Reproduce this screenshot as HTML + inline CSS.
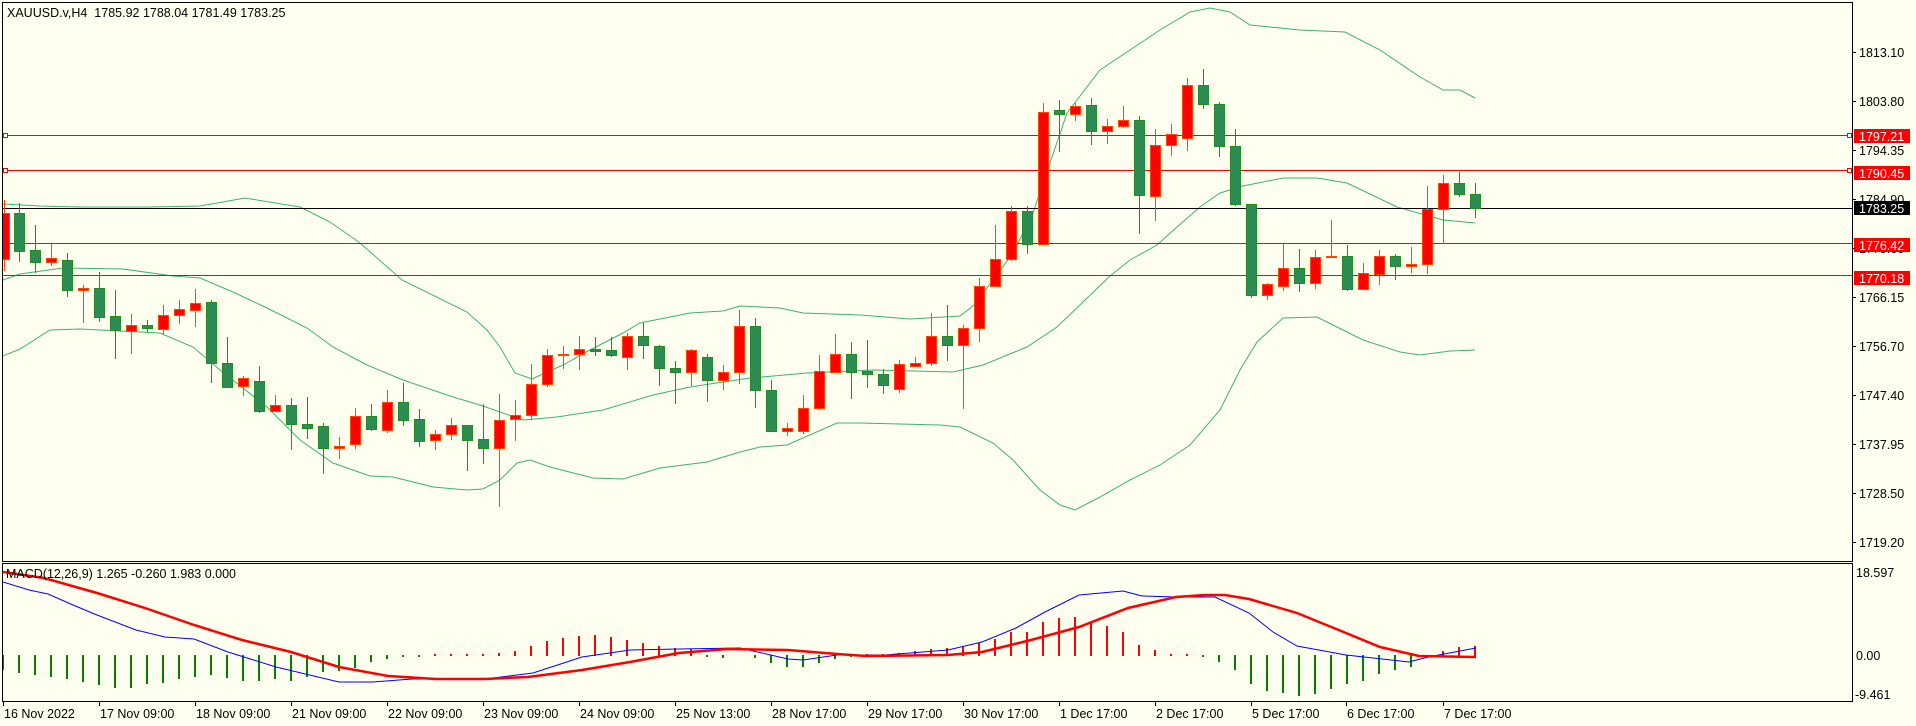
<!DOCTYPE html>
<html><head><meta charset="utf-8"><style>
html,body{margin:0;padding:0;background:#fffff0;}
svg{display:block;}
text{font-family:"Liberation Sans",sans-serif;font-size:12.5px;fill:#000;}
.g rect{fill:#2e8b57;stroke:#228b22;}
.g line{stroke:#228b22;}
.r rect{fill:#ff0000;stroke:#ff4500;}
.r line{stroke:#ff4500;}
</style></head><body>
<svg width="1916" height="726" viewBox="0 0 1916 726" xmlns="http://www.w3.org/2000/svg" shape-rendering="crispEdges">
<rect width="1916" height="726" fill="#fffff0"/>
<defs><clipPath id="cp"><rect x="3" y="3" width="1849" height="558"/></clipPath>
<clipPath id="cm"><rect x="3" y="564" width="1849" height="138"/></clipPath></defs>

<g clip-path="url(#cp)">
<g fill="none" stroke="#3cb371" stroke-width="1" shape-rendering="auto">
<polyline points="3,204 40,206 80,207 150,207 200,206 245,198 300,207 330,222 360,243 402,280 467,312 487,330 500,347 515,373 532,379 563,365 590,350 623,333 640,323 690,313 723,311 740,306 780,308 803,313 860,315 910,319 960,316 973,306 993,280 1013,253 1033,213 1050,163 1067,113 1100,70 1130,50 1160,30 1190,12 1210,8 1230,12 1250,25 1300,30 1345,32 1380,50 1420,77 1443,90 1460,90 1475,98"/>
<polyline points="3,280 20,274 63,268 123,269 173,276 200,278 233,292 267,308 307,328 333,347 367,365 403,380 453,397 480,405 523,420 557,417 603,410 653,395 690,387 750,378 807,373 873,370 953,372 983,365 1027,347 1057,327 1110,276 1130,260 1157,245 1177,227 1200,207 1220,193 1243,186 1283,178 1317,178 1347,183 1397,207 1443,220 1475,223"/>
<polyline points="3,356 20,349 50,330 80,329 120,331 160,333 193,347 220,370 267,407 300,440 333,463 370,476 393,477 433,487 467,490 483,489 500,480 517,463 530,460 550,467 593,478 623,479 660,468 707,462 740,452 760,447 787,445 837,423 860,423 940,425 960,427 993,443 1013,460 1040,490 1060,505 1075,510 1100,497 1130,480 1160,465 1190,445 1220,410 1240,370 1257,342 1283,318 1317,317 1363,340 1400,352 1420,355 1450,351 1475,350"/>
</g>
<g stroke-width="1">
<line x1="3" y1="135.5" x2="1852" y2="135.5" stroke="#ff0000"/>
<line x1="3" y1="170.5" x2="1852" y2="170.5" stroke="#ff0000"/>
<line x1="3" y1="208.5" x2="1852" y2="208.5" stroke="#000"/>
<line x1="3" y1="243.5" x2="1852" y2="243.5" stroke="#ff0000"/>
<line x1="3" y1="275.5" x2="1852" y2="275.5" stroke="#ff0000"/>
</g>
<rect x="3.5" y="133.5" width="4" height="4" fill="#fff" stroke="#ff0000"/>
<rect x="3.5" y="168.5" width="4" height="4" fill="#fff" stroke="#ff0000"/>
<rect x="1847.5" y="133.5" width="4" height="4" fill="#fff" stroke="#ff0000"/>
<rect x="1847.5" y="168.5" width="4" height="4" fill="#fff" stroke="#ff0000"/>

<g class="r"><line x1="4.5" y1="200" x2="4.5" y2="271"/><rect x="-0.5" y="213.5" width="10" height="46"/></g>
<g class="g"><line x1="19.5" y1="203" x2="19.5" y2="262"/><rect x="14.5" y="213.5" width="10" height="38"/></g>
<g class="g"><line x1="35.5" y1="225" x2="35.5" y2="273"/><rect x="30.5" y="250.5" width="10" height="12"/></g>
<g class="r"><line x1="51.5" y1="244" x2="51.5" y2="266"/><rect x="46.5" y="258.5" width="10" height="4"/></g>
<g class="g"><line x1="67.5" y1="253" x2="67.5" y2="297"/><rect x="62.5" y="260.5" width="10" height="30"/></g>
<g class="r"><line x1="83.5" y1="285" x2="83.5" y2="323"/><rect x="78.5" y="288.5" width="10" height="2"/></g>
<g class="g"><line x1="99.5" y1="272" x2="99.5" y2="322"/><rect x="94.5" y="288.5" width="10" height="29"/></g>
<g class="g"><line x1="115.5" y1="290" x2="115.5" y2="359"/><rect x="110.5" y="316.5" width="10" height="14"/></g>
<g class="r"><line x1="131.5" y1="314" x2="131.5" y2="354"/><rect x="126.5" y="325.5" width="10" height="6"/></g>
<g class="g"><line x1="147.5" y1="320" x2="147.5" y2="332"/><rect x="142.5" y="325.5" width="10" height="3"/></g>
<g class="r"><line x1="163.5" y1="305" x2="163.5" y2="334"/><rect x="158.5" y="315.5" width="10" height="14"/></g>
<g class="r"><line x1="179.5" y1="300" x2="179.5" y2="324"/><rect x="174.5" y="309.5" width="10" height="6"/></g>
<g class="r"><line x1="195.5" y1="289" x2="195.5" y2="327"/><rect x="190.5" y="303.5" width="10" height="7"/></g>
<g class="g"><line x1="211.5" y1="300" x2="211.5" y2="383"/><rect x="206.5" y="302.5" width="10" height="61"/></g>
<g class="g"><line x1="227.5" y1="337" x2="227.5" y2="388"/><rect x="222.5" y="363.5" width="10" height="24"/></g>
<g class="r"><line x1="243.5" y1="376" x2="243.5" y2="396"/><rect x="238.5" y="378.5" width="10" height="8"/></g>
<g class="g"><line x1="259.5" y1="366" x2="259.5" y2="413"/><rect x="254.5" y="381.5" width="10" height="30"/></g>
<g class="r"><line x1="275.5" y1="395" x2="275.5" y2="412"/><rect x="270.5" y="405.5" width="10" height="6"/></g>
<g class="g"><line x1="291.5" y1="398" x2="291.5" y2="450"/><rect x="286.5" y="405.5" width="10" height="19"/></g>
<g class="g"><line x1="307.5" y1="397" x2="307.5" y2="439"/><rect x="302.5" y="424.5" width="10" height="4"/></g>
<g class="g"><line x1="323.5" y1="423" x2="323.5" y2="474"/><rect x="318.5" y="426.5" width="10" height="22"/></g>
<g class="r"><line x1="339.5" y1="437" x2="339.5" y2="459"/><rect x="334.5" y="446.5" width="10" height="2"/></g>
<g class="r"><line x1="355.5" y1="408" x2="355.5" y2="449"/><rect x="350.5" y="416.5" width="10" height="28"/></g>
<g class="g"><line x1="371.5" y1="404" x2="371.5" y2="431"/><rect x="366.5" y="416.5" width="10" height="13"/></g>
<g class="r"><line x1="387.5" y1="390" x2="387.5" y2="433"/><rect x="382.5" y="402.5" width="10" height="28"/></g>
<g class="g"><line x1="403.5" y1="383" x2="403.5" y2="426"/><rect x="398.5" y="402.5" width="10" height="18"/></g>
<g class="g"><line x1="419.5" y1="409" x2="419.5" y2="447"/><rect x="414.5" y="419.5" width="10" height="22"/></g>
<g class="r"><line x1="435.5" y1="430" x2="435.5" y2="450"/><rect x="430.5" y="434.5" width="10" height="6"/></g>
<g class="r"><line x1="451.5" y1="418" x2="451.5" y2="440"/><rect x="446.5" y="425.5" width="10" height="9"/></g>
<g class="g"><line x1="467.5" y1="425" x2="467.5" y2="471"/><rect x="462.5" y="425.5" width="10" height="15"/></g>
<g class="g"><line x1="483.5" y1="404" x2="483.5" y2="464"/><rect x="478.5" y="439.5" width="10" height="9"/></g>
<g class="r"><line x1="499.5" y1="394" x2="499.5" y2="507"/><rect x="494.5" y="420.5" width="10" height="28"/></g>
<g class="r"><line x1="515.5" y1="400" x2="515.5" y2="441"/><rect x="510.5" y="415.5" width="10" height="4"/></g>
<g class="r"><line x1="531.5" y1="364" x2="531.5" y2="420"/><rect x="526.5" y="384.5" width="10" height="31"/></g>
<g class="r"><line x1="547.5" y1="349" x2="547.5" y2="387"/><rect x="542.5" y="355.5" width="10" height="29"/></g>
<g class="r"><line x1="563.5" y1="346" x2="563.5" y2="369"/><rect x="558.5" y="354.5" width="10" height="1"/></g>
<g class="r"><line x1="579.5" y1="336" x2="579.5" y2="370"/><rect x="574.5" y="349.5" width="10" height="5"/></g>
<g class="g"><line x1="595.5" y1="337" x2="595.5" y2="356"/><rect x="590.5" y="349.5" width="10" height="2"/></g>
<g class="g"><line x1="611.5" y1="337" x2="611.5" y2="357"/><rect x="606.5" y="350.5" width="10" height="5"/></g>
<g class="r"><line x1="627.5" y1="333" x2="627.5" y2="370"/><rect x="622.5" y="336.5" width="10" height="21"/></g>
<g class="g"><line x1="643.5" y1="323" x2="643.5" y2="359"/><rect x="638.5" y="336.5" width="10" height="9"/></g>
<g class="g"><line x1="659.5" y1="345" x2="659.5" y2="386"/><rect x="654.5" y="346.5" width="10" height="22"/></g>
<g class="g"><line x1="675.5" y1="361" x2="675.5" y2="404"/><rect x="670.5" y="368.5" width="10" height="4"/></g>
<g class="r"><line x1="691.5" y1="349" x2="691.5" y2="386"/><rect x="686.5" y="350.5" width="10" height="22"/></g>
<g class="g"><line x1="707.5" y1="354" x2="707.5" y2="402"/><rect x="702.5" y="357.5" width="10" height="23"/></g>
<g class="r"><line x1="723.5" y1="365" x2="723.5" y2="390"/><rect x="718.5" y="372.5" width="10" height="8"/></g>
<g class="r"><line x1="739.5" y1="310" x2="739.5" y2="384"/><rect x="734.5" y="326.5" width="10" height="46"/></g>
<g class="g"><line x1="755.5" y1="318" x2="755.5" y2="408"/><rect x="750.5" y="326.5" width="10" height="64"/></g>
<g class="g"><line x1="771.5" y1="380" x2="771.5" y2="431"/><rect x="766.5" y="390.5" width="10" height="41"/></g>
<g class="r"><line x1="787.5" y1="423" x2="787.5" y2="436"/><rect x="782.5" y="428.5" width="10" height="3"/></g>
<g class="r"><line x1="803.5" y1="395" x2="803.5" y2="434"/><rect x="798.5" y="408.5" width="10" height="23"/></g>
<g class="r"><line x1="819.5" y1="355" x2="819.5" y2="410"/><rect x="814.5" y="371.5" width="10" height="37"/></g>
<g class="r"><line x1="835.5" y1="334" x2="835.5" y2="373"/><rect x="830.5" y="354.5" width="10" height="18"/></g>
<g class="g"><line x1="851.5" y1="342" x2="851.5" y2="399"/><rect x="846.5" y="354.5" width="10" height="18"/></g>
<g class="g"><line x1="867.5" y1="340" x2="867.5" y2="388"/><rect x="862.5" y="371.5" width="10" height="3"/></g>
<g class="g"><line x1="883.5" y1="369" x2="883.5" y2="394"/><rect x="878.5" y="374.5" width="10" height="11"/></g>
<g class="r"><line x1="899.5" y1="360" x2="899.5" y2="393"/><rect x="894.5" y="364.5" width="10" height="25"/></g>
<g class="r"><line x1="915.5" y1="357" x2="915.5" y2="367"/><rect x="910.5" y="363.5" width="10" height="3"/></g>
<g class="r"><line x1="931.5" y1="313" x2="931.5" y2="366"/><rect x="926.5" y="336.5" width="10" height="27"/></g>
<g class="g"><line x1="947.5" y1="305" x2="947.5" y2="361"/><rect x="942.5" y="336.5" width="10" height="9"/></g>
<g class="r"><line x1="963.5" y1="325" x2="963.5" y2="409"/><rect x="958.5" y="328.5" width="10" height="17"/></g>
<g class="r"><line x1="979.5" y1="278" x2="979.5" y2="342"/><rect x="974.5" y="286.5" width="10" height="42"/></g>
<g class="r"><line x1="995.5" y1="225" x2="995.5" y2="287"/><rect x="990.5" y="259.5" width="10" height="27"/></g>
<g class="r"><line x1="1011.5" y1="206" x2="1011.5" y2="261"/><rect x="1006.5" y="211.5" width="10" height="48"/></g>
<g class="g"><line x1="1027.5" y1="206" x2="1027.5" y2="254"/><rect x="1022.5" y="211.5" width="10" height="33"/></g>
<g class="r"><line x1="1043.5" y1="103" x2="1043.5" y2="244"/><rect x="1038.5" y="112.5" width="10" height="132"/></g>
<g class="g"><line x1="1059.5" y1="100" x2="1059.5" y2="152"/><rect x="1054.5" y="110.5" width="10" height="4"/></g>
<g class="r"><line x1="1075.5" y1="103" x2="1075.5" y2="121"/><rect x="1070.5" y="106.5" width="10" height="8"/></g>
<g class="g"><line x1="1091.5" y1="98" x2="1091.5" y2="145"/><rect x="1086.5" y="105.5" width="10" height="26"/></g>
<g class="r"><line x1="1107.5" y1="119" x2="1107.5" y2="144"/><rect x="1102.5" y="126.5" width="10" height="5"/></g>
<g class="r"><line x1="1123.5" y1="106" x2="1123.5" y2="128"/><rect x="1118.5" y="120.5" width="10" height="6"/></g>
<g class="g"><line x1="1139.5" y1="116" x2="1139.5" y2="234"/><rect x="1134.5" y="120.5" width="10" height="75"/></g>
<g class="r"><line x1="1155.5" y1="129" x2="1155.5" y2="221"/><rect x="1150.5" y="145.5" width="10" height="51"/></g>
<g class="r"><line x1="1171.5" y1="124" x2="1171.5" y2="156"/><rect x="1166.5" y="134.5" width="10" height="11"/></g>
<g class="r"><line x1="1187.5" y1="78" x2="1187.5" y2="151"/><rect x="1182.5" y="85.5" width="10" height="53"/></g>
<g class="g"><line x1="1203.5" y1="69" x2="1203.5" y2="109"/><rect x="1198.5" y="85.5" width="10" height="19"/></g>
<g class="g"><line x1="1219.5" y1="102" x2="1219.5" y2="157"/><rect x="1214.5" y="104.5" width="10" height="42"/></g>
<g class="g"><line x1="1235.5" y1="129" x2="1235.5" y2="206"/><rect x="1230.5" y="146.5" width="10" height="58"/></g>
<g class="g"><line x1="1251.5" y1="204" x2="1251.5" y2="298"/><rect x="1246.5" y="204.5" width="10" height="91"/></g>
<g class="r"><line x1="1267.5" y1="283" x2="1267.5" y2="300"/><rect x="1262.5" y="284.5" width="10" height="11"/></g>
<g class="r"><line x1="1283.5" y1="244" x2="1283.5" y2="291"/><rect x="1278.5" y="268.5" width="10" height="18"/></g>
<g class="g"><line x1="1299.5" y1="249" x2="1299.5" y2="292"/><rect x="1294.5" y="268.5" width="10" height="15"/></g>
<g class="r"><line x1="1315.5" y1="250" x2="1315.5" y2="289"/><rect x="1310.5" y="257.5" width="10" height="26"/></g>
<g class="r"><line x1="1331.5" y1="220" x2="1331.5" y2="258"/><rect x="1326.5" y="256.5" width="10" height="1"/></g>
<g class="g"><line x1="1347.5" y1="245" x2="1347.5" y2="291"/><rect x="1342.5" y="256.5" width="10" height="33"/></g>
<g class="r"><line x1="1363.5" y1="263" x2="1363.5" y2="289"/><rect x="1358.5" y="273.5" width="10" height="16"/></g>
<g class="r"><line x1="1379.5" y1="250" x2="1379.5" y2="285"/><rect x="1374.5" y="256.5" width="10" height="18"/></g>
<g class="g"><line x1="1395.5" y1="254" x2="1395.5" y2="280"/><rect x="1390.5" y="256.5" width="10" height="10"/></g>
<g class="r"><line x1="1411.5" y1="247" x2="1411.5" y2="273"/><rect x="1406.5" y="264.5" width="10" height="2"/></g>
<g class="r"><line x1="1427.5" y1="186" x2="1427.5" y2="274"/><rect x="1422.5" y="209.5" width="10" height="55"/></g>
<g class="r"><line x1="1443.5" y1="175" x2="1443.5" y2="244"/><rect x="1438.5" y="183.5" width="10" height="26"/></g>
<g class="g"><line x1="1459.5" y1="172" x2="1459.5" y2="197"/><rect x="1454.5" y="183.5" width="10" height="11"/></g>
<g class="g"><line x1="1475.5" y1="183" x2="1475.5" y2="218"/><rect x="1470.5" y="194.5" width="10" height="14"/></g>
</g>

<g clip-path="url(#cm)">
<g stroke-width="2">
<g stroke="#008000">
<line x1="3" y1="655" x2="3" y2="670"/><line x1="19" y1="655" x2="19" y2="673"/><line x1="35" y1="655" x2="35" y2="675"/><line x1="51" y1="655" x2="51" y2="677"/><line x1="67" y1="655" x2="67" y2="679"/><line x1="83" y1="655" x2="83" y2="682"/><line x1="99" y1="655" x2="99" y2="685"/><line x1="115" y1="655" x2="115" y2="688"/><line x1="131" y1="655" x2="131" y2="688"/><line x1="147" y1="655" x2="147" y2="684"/><line x1="163" y1="655" x2="163" y2="683"/><line x1="179" y1="655" x2="179" y2="679"/><line x1="195" y1="655" x2="195" y2="677"/><line x1="211" y1="655" x2="211" y2="675"/><line x1="227" y1="655" x2="227" y2="678"/><line x1="243" y1="655" x2="243" y2="681"/><line x1="259" y1="655" x2="259" y2="681"/><line x1="275" y1="655" x2="275" y2="679"/><line x1="291" y1="655" x2="291" y2="681"/><line x1="307" y1="655" x2="307" y2="677"/><line x1="323" y1="655" x2="323" y2="672"/><line x1="339" y1="655" x2="339" y2="671"/><line x1="355" y1="655" x2="355" y2="668"/><line x1="371" y1="655" x2="371" y2="662"/><line x1="387" y1="655" x2="387" y2="659"/><line x1="403" y1="655" x2="403" y2="657"/><line x1="419" y1="655" x2="419" y2="657"/>
<line x1="707" y1="655" x2="707" y2="657"/><line x1="723" y1="655" x2="723" y2="658"/><line x1="755" y1="655" x2="755" y2="658"/><line x1="771" y1="655" x2="771" y2="663"/><line x1="787" y1="655" x2="787" y2="667"/><line x1="803" y1="655" x2="803" y2="667"/><line x1="819" y1="655" x2="819" y2="663"/><line x1="835" y1="655" x2="835" y2="659"/><line x1="851" y1="655" x2="851" y2="657"/>
<line x1="1203" y1="655" x2="1203" y2="657"/><line x1="1219" y1="655" x2="1219" y2="662"/><line x1="1235" y1="655" x2="1235" y2="670"/><line x1="1251" y1="655" x2="1251" y2="684"/><line x1="1267" y1="655" x2="1267" y2="691"/><line x1="1283" y1="655" x2="1283" y2="693"/><line x1="1299" y1="655" x2="1299" y2="696"/><line x1="1315" y1="655" x2="1315" y2="694"/><line x1="1331" y1="655" x2="1331" y2="689"/><line x1="1347" y1="655" x2="1347" y2="684"/><line x1="1363" y1="655" x2="1363" y2="681"/><line x1="1379" y1="655" x2="1379" y2="674"/><line x1="1395" y1="655" x2="1395" y2="670"/><line x1="1411" y1="655" x2="1411" y2="667"/><line x1="1427" y1="655" x2="1427" y2="658"/>
</g>
<g stroke="#ff0000">
<line x1="435" y1="654" x2="435" y2="656"/><line x1="451" y1="654" x2="451" y2="656"/><line x1="467" y1="654" x2="467" y2="656"/><line x1="483" y1="654" x2="483" y2="656"/><line x1="499" y1="653" x2="499" y2="656"/><line x1="515" y1="651" x2="515" y2="656"/><line x1="531" y1="646" x2="531" y2="656"/><line x1="547" y1="641" x2="547" y2="656"/><line x1="563" y1="638" x2="563" y2="656"/><line x1="579" y1="636" x2="579" y2="656"/><line x1="595" y1="635" x2="595" y2="656"/><line x1="611" y1="637" x2="611" y2="656"/><line x1="627" y1="640" x2="627" y2="656"/><line x1="643" y1="643" x2="643" y2="656"/><line x1="659" y1="646" x2="659" y2="656"/><line x1="675" y1="648" x2="675" y2="656"/><line x1="691" y1="649" x2="691" y2="656"/>
<line x1="867" y1="654" x2="867" y2="656"/><line x1="883" y1="654" x2="883" y2="656"/><line x1="899" y1="653" x2="899" y2="656"/><line x1="915" y1="651" x2="915" y2="656"/><line x1="931" y1="649" x2="931" y2="656"/><line x1="947" y1="648" x2="947" y2="656"/><line x1="963" y1="647" x2="963" y2="656"/><line x1="979" y1="643" x2="979" y2="656"/><line x1="995" y1="639" x2="995" y2="656"/><line x1="1011" y1="632" x2="1011" y2="656"/><line x1="1027" y1="632" x2="1027" y2="656"/><line x1="1043" y1="622" x2="1043" y2="656"/><line x1="1059" y1="618" x2="1059" y2="656"/><line x1="1075" y1="617" x2="1075" y2="656"/><line x1="1091" y1="622" x2="1091" y2="656"/><line x1="1107" y1="626" x2="1107" y2="656"/><line x1="1123" y1="632" x2="1123" y2="656"/><line x1="1139" y1="645" x2="1139" y2="656"/><line x1="1155" y1="650" x2="1155" y2="656"/><line x1="1171" y1="654" x2="1171" y2="656"/><line x1="1187" y1="654" x2="1187" y2="656"/>
<line x1="1443" y1="651" x2="1443" y2="656"/><line x1="1459" y1="647" x2="1459" y2="656"/><line x1="1475" y1="646" x2="1475" y2="657"/>
</g>
</g>
<polyline fill="none" stroke="#0000ff" stroke-width="1" shape-rendering="auto" points="3,582 29,590 48,594 73,605 97,615 136,630 165,637 194,639 228,652 276,667 339,682 373,682 412,679 485,679 533,673 582,657 630,650 679,649 740,648 788,659 803,660 837,655 885,655 948,650 982,642 1016,628 1045,612 1079,595 1123,591 1142,596 1176,597 1215,597 1249,613 1273,632 1297,646 1346,655 1409,662 1428,657 1476,648"/>
<polyline fill="none" stroke="#ff0000" stroke-width="2.5" shape-rendering="auto" points="3,572 44,578 97,593 145,608 194,625 242,640 291,652 339,667 388,676 436,679 485,679 528,677 582,670 630,662 679,653 727,649 788,650 837,654 866,656 948,655 982,652 1031,640 1079,627 1128,608 1176,597 1205,595 1225,595 1249,599 1297,613 1346,633 1380,647 1419,656 1476,657"/>
</g>

<g fill="none" stroke="#000" stroke-width="1">
<rect x="2.5" y="2.5" width="1850" height="559"/>
<rect x="2.5" y="563.5" width="1850" height="138"/>
</g>

<text x="7" y="17" xml:space="preserve">XAUUSD.v,H4  1785.92 1788.04 1781.49 1783.25</text>
<text x="6" y="578" font-size="11.5">MACD(12,26,9) 1.265 -0.260 1.983 0.000</text>

<g stroke="#000">
<line x1="1853" y1="52.5" x2="1856" y2="52.5"/><line x1="1853" y1="101.5" x2="1856" y2="101.5"/><line x1="1853" y1="150.5" x2="1856" y2="150.5"/><line x1="1853" y1="199.5" x2="1856" y2="199.5"/><line x1="1853" y1="248.5" x2="1856" y2="248.5"/><line x1="1853" y1="297.5" x2="1856" y2="297.5"/><line x1="1853" y1="346.5" x2="1856" y2="346.5"/><line x1="1853" y1="395.5" x2="1856" y2="395.5"/><line x1="1853" y1="444.5" x2="1856" y2="444.5"/><line x1="1853" y1="493.5" x2="1856" y2="493.5"/><line x1="1853" y1="542.5" x2="1856" y2="542.5"/>
</g>
<g>
<text x="1859" y="57">1813.10</text>
<text x="1859" y="106">1803.80</text>
<text x="1859" y="155">1794.35</text>
<text x="1859" y="204">1784.90</text>
<text x="1859" y="253">1775.60</text>
<text x="1859" y="302">1766.15</text>
<text x="1859" y="351">1756.70</text>
<text x="1859" y="400">1747.40</text>
<text x="1859" y="449">1737.95</text>
<text x="1859" y="498">1728.50</text>
<text x="1859" y="547">1719.20</text>
</g>
<rect x="1854" y="129" width="56" height="14" fill="#ff0000"/><text x="1859" y="141" style="fill:#fff">1797.21</text>
<rect x="1854" y="166" width="56" height="14" fill="#ff0000"/><text x="1859" y="178" style="fill:#fff">1790.45</text>
<rect x="1854" y="201" width="56" height="14" fill="#000"/><text x="1859" y="213" style="fill:#fff">1783.25</text>
<rect x="1854" y="238" width="56" height="14" fill="#ff0000"/><text x="1859" y="250" style="fill:#fff">1776.42</text>
<rect x="1854" y="271" width="56" height="14" fill="#ff0000"/><text x="1859" y="283" style="fill:#fff">1770.18</text>

<text x="1856" y="577">18.597</text>
<text x="1856" y="660">0.00</text>
<text x="1855" y="699">-9.461</text>

<g stroke="#000">
<line x1="3.5" y1="702" x2="3.5" y2="706"/><line x1="99.5" y1="702" x2="99.5" y2="706"/><line x1="195.5" y1="702" x2="195.5" y2="706"/><line x1="291.5" y1="702" x2="291.5" y2="706"/><line x1="387.5" y1="702" x2="387.5" y2="706"/><line x1="483.5" y1="702" x2="483.5" y2="706"/><line x1="579.5" y1="702" x2="579.5" y2="706"/><line x1="675.5" y1="702" x2="675.5" y2="706"/><line x1="771.5" y1="702" x2="771.5" y2="706"/><line x1="867.5" y1="702" x2="867.5" y2="706"/><line x1="963.5" y1="702" x2="963.5" y2="706"/><line x1="1059.5" y1="702" x2="1059.5" y2="706"/><line x1="1155.5" y1="702" x2="1155.5" y2="706"/><line x1="1251.5" y1="702" x2="1251.5" y2="706"/><line x1="1346.5" y1="702" x2="1346.5" y2="706"/><line x1="1443.5" y1="702" x2="1443.5" y2="706"/>
</g>
<g font-size="12">
<text x="4" y="718">16 Nov 2022</text>
<text x="100" y="718">17 Nov 09:00</text>
<text x="196" y="718">18 Nov 09:00</text>
<text x="292" y="718">21 Nov 09:00</text>
<text x="388" y="718">22 Nov 09:00</text>
<text x="484" y="718">23 Nov 09:00</text>
<text x="580" y="718">24 Nov 09:00</text>
<text x="676" y="718">25 Nov 13:00</text>
<text x="772" y="718">28 Nov 17:00</text>
<text x="868" y="718">29 Nov 17:00</text>
<text x="964" y="718">30 Nov 17:00</text>
<text x="1060" y="718">1 Dec 17:00</text>
<text x="1156" y="718">2 Dec 17:00</text>
<text x="1252" y="718">5 Dec 17:00</text>
<text x="1347" y="718">6 Dec 17:00</text>
<text x="1444" y="718">7 Dec 17:00</text>
</g>
</svg>
</body></html>
